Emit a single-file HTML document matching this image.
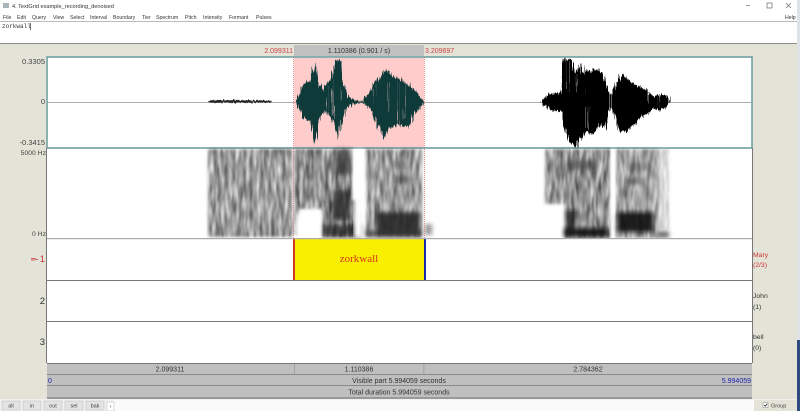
<!DOCTYPE html>
<html><head><meta charset="utf-8"><style>
html,body{margin:0;padding:0;background:#fff;width:800px;height:411px;overflow:hidden}
svg{display:block}
text{font-family:"Liberation Sans",sans-serif}
</style></head><body>
<svg width="800" height="411" viewBox="0 0 800 411" xmlns="http://www.w3.org/2000/svg">
<defs>
<filter id="n" x="-5%" y="-5%" width="110%" height="110%">
<feGaussianBlur in="SourceGraphic" stdDeviation="1.2" result="b"/>
<feTurbulence type="fractalNoise" baseFrequency="0.28 0.05" numOctaves="2" seed="4"/>
<feColorMatrix type="matrix" values="0 0 0 0 0 0 0 0 0 0 0 0 0 0 0 1.300 0 0 0 -0.05" result="a"/>
<feComposite in="b" in2="a" operator="in"/>
<feGaussianBlur stdDeviation="0.6"/>
</filter>
<filter id="b"><feGaussianBlur stdDeviation="2"/></filter>
<filter id="j" x="-5%" y="-15%" width="110%" height="130%" color-interpolation-filters="sRGB">
<feTurbulence type="fractalNoise" baseFrequency="0.7 0.01" numOctaves="2" seed="7"/>
<feDisplacementMap in="SourceGraphic" scale="9" xChannelSelector="A" yChannelSelector="R"/>
</filter>
<filter id="j2" x="-5%" y="-400%" width="110%" height="900%" color-interpolation-filters="sRGB">
<feTurbulence type="fractalNoise" baseFrequency="0.6 0.02" numOctaves="1" seed="3"/>
<feDisplacementMap in="SourceGraphic" scale="5" xChannelSelector="A" yChannelSelector="R"/>
</filter>
</defs>
<rect width="800" height="411" fill="#fff"/>
<!-- title -->
<rect x="3" y="3" width="6" height="5" fill="#a9b4b8"/>
<text x="12" y="8" font-size="5.6" fill="#333">4. TextGrid example_recording_denoised</text>
<rect x="746" y="5" width="4" height="1" fill="#999"/>
<rect x="767" y="3" width="5" height="5" fill="none" stroke="#666" stroke-width=".7"/>
<path d="M786 3l5 5M791 3l-5 5" stroke="#666" stroke-width=".7"/>
<!-- menu -->
<g font-size="5.2" fill="#333">
<text x="3" y="19">File</text><text x="17" y="19">Edit</text><text x="32" y="19">Query</text><text x="53" y="19">View</text><text x="70" y="19">Select</text><text x="90" y="19">Interval</text><text x="113" y="19">Boundary</text><text x="142" y="19">Tier</text><text x="156" y="19">Spectrum</text><text x="185" y="19">Pitch</text><text x="203" y="19">Intensity</text><text x="229" y="19">Formant</text><text x="256" y="19">Pulses</text><text x="785" y="19">Help</text>
</g>
<rect y="21" width="797" height="1" fill="#bbb"/>
<text x="2" y="28" font-size="6" fill="#333" style="font-family:'Liberation Mono',monospace">zorkwall</text>
<rect x="30" y="23" width=".7" height="7" fill="#333"/>
<rect y="43" width="797" height="1" fill="#8f8f88"/>
<!-- panel -->
<rect y="44" width="797" height="355" fill="#e3e3d8"/>
<rect x="797" width="3" height="340" fill="#dfe3e8"/>
<rect x="797" y="340" width="3" height="71" fill="#2f4a7f"/>
<!-- top strip -->
<rect x="294" y="45" width="130" height="11" fill="#c0c0c0"/>
<text x="359" y="53" font-size="7" fill="#333" text-anchor="middle">1.110386 (0.901 / s)</text>
<text x="293" y="53" font-size="7" fill="#c44" text-anchor="end">2.099311</text>
<text x="425" y="53" font-size="7" fill="#c44">3.209697</text>
<!-- main -->
<rect x="46" y="57" width="706" height="306" fill="#fff"/>
<rect x="294" y="58" width="130" height="90" fill="#ffcccc"/>
<rect x="47" y="102" width="704" height=".8" fill="#999"/>
<!-- small blob -->
<g filter="url(#j2)">
<path d="M208 101h2l1-1 5 .4 3-.5 8 .3 8-.4 3 .6h6l1-.5 8 .6h2l2-.4 9 .4 6 .3v1.400l-8 .4-8-.2-6 .3-8-.2-8 .4-9-.6-6 .6-7-.2-3-.3z" fill="#222"/>
</g>
<!-- selected wave -->
<g filter="url(#j)">
<g transform="translate(280,50) scale(.33333)">
<path fill="#0f3a3a" d="M48 155L60 125 70 100 85 95 98 70 108 40 115 90 125 120 140 100 155 85 170 28 185 35 190 100 205 140 225 150 245 155 255 140 265 135 275 110 285 90 300 85 310 60 325 65 340 80 365 90 385 105 410 125 420 140 432 155 420 175 405 190 385 230 350 225 325 235 310 265 295 225 285 200 265 170 245 158 210 165 195 180 185 220 175 270 155 210 140 185 125 190 115 220 105 280 90 215 70 205 60 180 48 160Z"/>
<path stroke="#ffcccc" stroke-width="2" opacity=".55" d="M142 110V185M158 90V200M185 60V150M280 105V210M355 95V225M375 105V205M325 100V200"/>
</g>
</g>
<!-- black wave -->
<g filter="url(#j)">
<g transform="translate(520,50) scale(.33333)">
<path fill="#000" d="M65 155L80 135 100 130 125 128 130 60 135 24 155 24 162 60 170 70 185 34 190 70 200 60 215 65 230 55 250 70 265 125 275 135 290 95 310 70 325 90 345 105 370 115 385 125 400 140 415 135 440 135 450 155 435 175 415 180 400 175 385 190 365 200 340 225 310 250 295 240 285 200 270 170 255 240 240 225 215 255 195 245 175 275 170 292 150 280 135 240 125 185 100 182 75 170 65 158Z"/>
<path stroke="#fff" stroke-width="2" opacity=".6" d="M145 30V125M170 75V130M197 70V130M385 125V180M415 140V175M205 170V240M270 130V170"/>
</g>
</g>
<!-- teal frame -->
<rect x="47" y="57" width="705" height="91" fill="none" stroke="#6f9fa0" stroke-width="1.600"/>
<!-- spectrogram -->
<g filter="url(#n)">
<rect x="208" y="149" width="84" height="88" fill="#5c5c5c"/>
<rect x="294" y="149" width="58" height="60" fill="#4a4a4a"/>
<rect x="293" y="205" width="6" height="30" fill="#777"/>
<rect x="322" y="200" width="38" height="37" fill="#333"/>
<rect x="366" y="149" width="56" height="88" fill="#5c5c5c"/>
<rect x="545" y="149" width="20" height="55" fill="#555"/>
<rect x="565" y="149" width="45" height="89" fill="#4a4a4a"/>
<rect x="616" y="149" width="42" height="89" fill="#666"/>
<rect x="658" y="149" width="11" height="80" fill="#bbb"/>
</g>
<g filter="url(#b)">
<rect x="335" y="149" width="16" height="25" fill="#333" opacity=".7"/>
<rect x="333" y="190" width="18" height="30" fill="#222" opacity=".75"/>
<rect x="322" y="225" width="40" height="12" fill="#222" opacity=".7"/>
<rect x="376" y="212" width="44" height="24" fill="#222" opacity=".85"/>
<rect x="366" y="230" width="56" height="7" fill="#333" opacity=".7"/>
<rect x="395" y="176" width="14" height="8" fill="#333" opacity=".55"/>
<rect x="392" y="160" width="14" height="8" fill="#444" opacity=".4"/>
<rect x="425" y="224" width="7" height="11" fill="#999"/>
<rect x="568" y="160" width="26" height="10" fill="#333" opacity=".55"/>
<rect x="564" y="228" width="44" height="9" fill="#111" opacity=".9"/>
<rect x="566" y="210" width="10" height="18" fill="#111" opacity=".75"/>
<rect x="617" y="212" width="36" height="20" fill="#111" opacity=".9"/>
<rect x="626" y="178" width="14" height="7" fill="#333" opacity=".55"/>
<rect x="626" y="162" width="24" height="9" fill="#444" opacity=".45"/>
<rect x="657" y="231" width="12" height="7" fill="#444" opacity=".75"/>
</g>
<rect x="297" y="214" width="24" height="24" fill="#fff" filter="url(#b)"/>
<rect x="354" y="150" width="9" height="88" fill="#fff" filter="url(#b)"/>
<rect x="611" y="150" width="4" height="66" fill="#fff" filter="url(#b)"/>
<rect x="46" y="238" width="706" height="43" fill="#fff"/>
<!-- selection dotted -->
<path d="M293.500 57V238M424.500 57V238" stroke="#d66" stroke-width=".7" stroke-dasharray="1 1"/>
<!-- tiers -->
<rect x="293" y="239" width="132" height="42" fill="#f8f000"/>
<rect x="293" y="239" width="2" height="42" fill="#d33a1a"/>
<rect x="424" y="239" width="2" height="42" fill="#1a2aa8"/>
<text x="359" y="262" font-size="11" fill="#dc3218" text-anchor="middle" style="font-family:'Liberation Serif',serif">zorkwall</text>
<rect x="46" y="238" width="706" height="1.200" fill="#aaa"/>
<rect x="46" y="280" width="706" height="1" fill="#777"/>
<rect x="46" y="321" width="706" height="1" fill="#777"/>
<rect x="46" y="148" width="1" height="215" fill="#777"/>
<rect x="752" y="148" width="1" height="215" fill="#777"/>
<!-- left labels -->
<g font-size="7.500" fill="#444" text-anchor="end">
<text x="45" y="64">0.3305</text><text x="45" y="104">0</text><text x="45" y="145">-0.3415</text>
</g>
<g font-size="6.800" fill="#444" text-anchor="end">
<text x="46" y="155">5000 Hz</text><text x="46" y="236">0 Hz</text>
</g>
<text x="45" y="262" font-size="9.500" fill="#c33" text-anchor="end">1</text>
<path d="M31 258.500h4l1 1h2M31 260h4" stroke="#c33" stroke-width=".8" fill="none"/>
<text x="45" y="304" font-size="9.500" fill="#333" text-anchor="end">2</text>
<text x="45" y="345" font-size="9.500" fill="#333" text-anchor="end">3</text>
<!-- right labels -->
<g font-size="6.800">
<text x="753" y="257" fill="#c33">Mary</text><text x="753" y="267" fill="#c33">(2/3)</text>
<text x="753" y="298" fill="#333">John</text><text x="753" y="309" fill="#333">(1)</text>
<text x="753" y="339" fill="#333">bell</text><text x="753" y="350" fill="#333">(0)</text>
</g>
<!-- bottom strips -->
<rect x="47" y="363" width="705" height="36" fill="#bfbfbf"/>
<rect x="47" y="363" width="705" height="1" fill="#777"/>
<rect x="47" y="374" width="705" height="1" fill="#8a8a8a"/>
<rect x="47" y="385" width="705" height="1" fill="#8a8a8a"/>
<rect x="47" y="397" width="705" height="2" fill="#999"/>
<rect x="294" y="364" width=".8" height="10" fill="#999"/>
<rect x="423.500" y="364" width=".8" height="10" fill="#999"/>
<g font-size="7" fill="#333" text-anchor="middle">
<text x="170" y="371.500">2.099311</text><text x="359" y="371.500">1.110386</text><text x="588" y="371.500">2.784362</text>
<text x="399" y="383">Visible part 5.994059 seconds</text>
<text x="399" y="394.500">Total duration 5.994059 seconds</text>
</g>
<text x="48" y="383" font-size="7" fill="#22a">0</text>
<text x="751" y="383" font-size="7" fill="#22a" text-anchor="end">5.994059</text>
<!-- bottom bar -->
<rect y="399" width="797" height="12" fill="#f0f0f0"/>
<rect x="114" y="400" width="640" height="11" fill="#fafafa"/>
<g fill="#e3e3e3" stroke="#bbb" stroke-width=".5">
<rect x="2" y="401" width="18" height="9"/><rect x="23" y="401" width="18" height="9"/><rect x="44" y="401" width="18" height="9"/><rect x="65" y="401" width="18" height="9"/><rect x="86" y="401" width="18" height="9"/>
<rect x="107" y="402" width="7" height="9" fill="#fff"/>
</g>
<g font-size="5.500" fill="#444" text-anchor="middle">
<text x="11" y="407.500">all</text><text x="32" y="407.500">in</text><text x="53" y="407.500">out</text><text x="74" y="407.500">sel</text><text x="95" y="407.500">bak</text>
<text x="110.500" y="408">‹</text>
</g>
<rect x="754" y="400" width="43" height="11" fill="#e3e3d8"/>
<rect x="763" y="402.500" width="5" height="5" fill="#fff" stroke="#888" stroke-width=".5"/>
<path d="M764 405l1.200 1.200 2-2.500" stroke="#222" stroke-width=".8" fill="none"/>
<text x="771" y="407.500" font-size="5.500" fill="#444">Group</text>
</svg>
</body></html>
